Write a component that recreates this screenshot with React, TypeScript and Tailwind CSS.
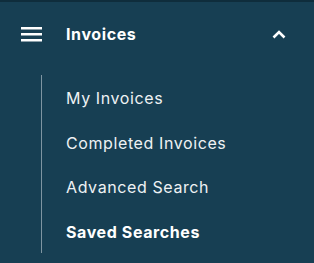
import React from "react";

export default function App() {
  const items = [
    { label: "My Invoices", bold: false },
    { label: "Completed Invoices", bold: false },
    { label: "Advanced Search", bold: false },
    { label: "Saved Searches", bold: true },
  ];
  return (
    <div
      className="w-[314px] h-[263px] bg-[#173f53] border-t-[2px] border-[#0f2d3c] text-white"
      style={{ fontFamily: "Inter, 'Open Sans', sans-serif" }}
    >
      <div className="flex items-center h-[64px] pl-[21px] pr-[28px]">
        <svg width="21" height="15" viewBox="0 0 21 15" className="shrink-0">
          <rect x="0" y="0" width="21" height="2.5" fill="#fff" />
          <rect x="0" y="6" width="21" height="2.5" fill="#fff" />
          <rect x="0" y="12" width="21" height="2.5" fill="#fff" />
        </svg>
        <span className="ml-[24px] text-[16px] font-bold tracking-[0.6px] flex-1">Invoices</span>
        <svg width="14" height="9" viewBox="0 0 14 9" className="shrink-0">
          <path d="M1.5 7.5 L7 2 L12.5 7.5" stroke="#fff" strokeWidth="2.6" fill="none" />
        </svg>
      </div>
      <div className="ml-[41px] mt-[9px] border-l border-[#7f95a1] pt-[1px] h-[178px]">
        {items.map((it) => (
          <div
            key={it.label}
            className={`h-[44.5px] flex items-center pl-[24px] text-[16px] tracking-[0.6px] ${
              it.bold ? "font-bold" : "font-normal text-[#eef2f4]"
            }`}
          >
            {it.label}
          </div>
        ))}
      </div>
    </div>
  );
}
